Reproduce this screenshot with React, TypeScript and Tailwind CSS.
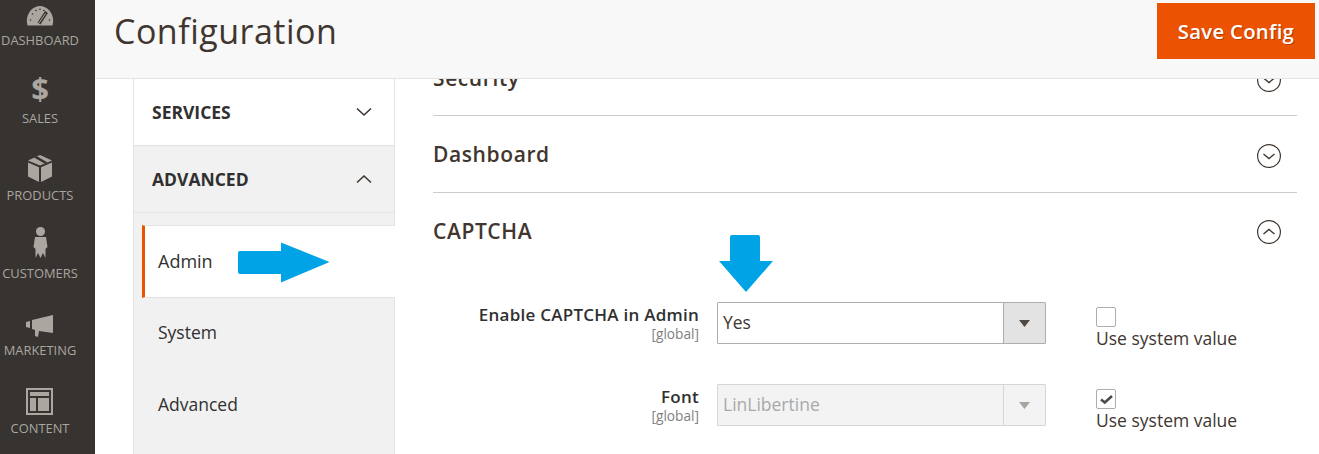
import { ReactNode } from 'react';

const FONT = "font-['Open_Sans',sans-serif]";

function NavItem({ label, icon, className }: { label: string; icon: ReactNode; className: string }) {
  return (
    <div className={`flex flex-col items-center h-[59px] ${className}`}>
      <div className="h-[38px] flex items-end justify-center">{icon}</div>
      <span className="mt-[5px] text-[12.9px] leading-[16px] text-[#aaa6a0] whitespace-nowrap">{label}</span>
    </div>
  );
}

function CircleChevron({ up }: { up?: boolean }) {
  return (
    <svg width="26" height="26" viewBox="0 0 26 26" fill="none" stroke="#41362f" strokeWidth="1.2">
      <circle cx="13" cy="13" r="11.4" />
      <path d={up ? 'M7.5 15 L13 10.5 L18.5 15' : 'M7.5 11 L13 15.5 L18.5 11'} strokeWidth="1.4" />
    </svg>
  );
}

function Chevron({ up }: { up?: boolean }) {
  return (
    <svg width="16" height="10" viewBox="0 0 16 10" fill="none" stroke="#41362f" strokeWidth="1.6">
      <path d={up ? 'M1 8.5 L8 2 L15 8.5' : 'M1 1.5 L8 8 L15 1.5'} />
    </svg>
  );
}

function BlueArrowRight() {
  return (
    <svg width="92" height="41" viewBox="0 0 92 41" className="block">
      <path d="M2 9 H43 V0.5 L91.5 20 L43 40.5 V32 H2 Q0 32 0 30 V11 Q0 9 2 9 Z" fill="#00a3e6" />
    </svg>
  );
}

function BlueArrowDown() {
  return (
    <svg width="56" height="58" viewBox="0 0 56 58" className="block">
      <path d="M12 2 Q12 0 14 0 H40 Q42 0 42 2 V26 H55 L28 57 L1 26 H12 Z" fill="#00a3e6" />
    </svg>
  );
}

function SelectBox({ value, disabled }: { value: string; disabled?: boolean }) {
  return (
    <div
      className={`w-[329px] h-[42px] flex border rounded-[1px] ${
        disabled ? 'border-[#d6d6d6] bg-[#f3f3f3]' : 'border-[#adadad] bg-white'
      }`}
    >
      <div className={`flex-1 pl-[5px] pb-[2px] flex items-center text-[17.5px] ${disabled ? 'text-[#a9a9a9]' : 'text-[#41362f]'}`}>
        {value}
      </div>
      <div
        className={`w-[42px] border-l flex items-center justify-center ${
          disabled ? 'border-[#d6d6d6] bg-[#f3f3f3]' : 'border-[#adadad] bg-[#e3e3e3]'
        }`}
      >
        <svg width="11" height="7" viewBox="0 0 11 7">
          <path d="M0 0 H11 L5.5 7 Z" fill={disabled ? '#a8a5a0' : '#514943'} />
        </svg>
      </div>
    </div>
  );
}

function SystemValue({ checked }: { checked?: boolean }) {
  return (
    <div className="ml-[50px] w-[150px] pt-[5px]">
      <div className="w-[20px] h-[20px] border border-[#adadad] rounded-[2px] bg-white flex items-center justify-center">
        {checked && (
          <svg width="13" height="9" viewBox="0 0 13 9" fill="none" stroke="#514943" strokeWidth="2.6">
            <path d="M1 4.5 L4.8 7.5 L12 1" />
          </svg>
        )}
      </div>
      <div className="text-[17.5px] leading-[22px] text-[#41362f] whitespace-nowrap">Use system value</div>
    </div>
  );
}

function FieldRow({ label, value, disabled, checked, className }: { label: string; value: string; disabled?: boolean; checked?: boolean; className: string }) {
  return (
    <div className={`flex ${className}`}>
      <div className="w-[284px] text-right pr-[18px]">
        <div className="mt-[2px] text-[17px] leading-[22px] font-semibold text-[#303030] tracking-[0.25px] whitespace-nowrap">{label}</div>
        <div className="mt-[1px] text-[13.7px] leading-[13px] text-[#808080]">[global]</div>
      </div>
      <SelectBox value={value} disabled={disabled} />
      <SystemValue checked={checked} />
    </div>
  );
}

export default function App() {
  return (
    <div className={`w-[1319px] h-[454px] overflow-hidden flex bg-white ${FONT}`}>
      <aside className="w-[95px] shrink-0 bg-[#373330] flex flex-col items-center pr-[15px]">
        <NavItem
          label="DASHBOARD"
          className="mt-[-11px]"
          icon={
            <svg width="28" height="20" viewBox="0 0 28 20" className="mb-[1px]">
              <path d="M1.5 19.5 C-1.5 9 6 0 14 0 C22 0 29.5 9 26.5 19.5 Z" fill="#aaa6a0" />
              <g fill="#373330">
                <circle cx="4.5" cy="14" r="0.8" />
                <circle cx="6.5" cy="8" r="0.8" />
                <circle cx="10" cy="4.5" r="0.8" />
                <circle cx="14" cy="3.2" r="0.8" />
                <circle cx="18" cy="4.5" r="0.8" />
                <circle cx="23.5" cy="14" r="0.8" />
              </g>
              <path d="M13 17.5 L20.5 6" stroke="#373330" strokeWidth="3.4" />
              <path d="M13 17 L19.5 7.5" stroke="#aaa6a0" strokeWidth="1" />
            </svg>
          }
        />
        <NavItem
          label="SALES"
          className="mt-[19px]"
          icon={<span className="text-[31px] leading-[30px] font-bold text-[#aaa6a0] mb-[2px]">$</span>}
        />
        <NavItem
          label="PRODUCTS"
          className="mt-[18px]"
          icon={
            <svg width="24" height="27" viewBox="0 0 24 27" fill="#aaa6a0">
              <path d="M12 0 L24 5.5 L12 10.5 L0 5.5 Z" />
              <path d="M6 2.6 L9 1.3 L19.5 7.4 L16.5 8.6 Z" fill="#373330" />
              <path d="M0 7.5 L11 12.2 V27 L0 21.5 Z" />
              <path d="M24 7.5 L13 12.2 V27 L24 21.5 Z" />
            </svg>
          }
        />
        <NavItem
          label="CUSTOMERS"
          className="mt-[19px]"
          icon={
            <svg width="15" height="31" viewBox="0 0 15 31" fill="#aaa6a0" className="mb-[2px]">
              <circle cx="7.5" cy="4.5" r="4.5" />
              <path d="M2 10 H13 L14.5 20 L12.5 22 V31 L10 26 L7.5 31 L5 26 L2.5 31 V22 L0.5 20 Z" />
            </svg>
          }
        />
        <NavItem
          label="MARKETING"
          className="mt-[18px]"
          icon={
            <svg width="27" height="22" viewBox="0 0 27 22" fill="#aaa6a0">
              <path d="M0 7 L4 6 V13 L0 12 Z" />
              <path d="M6 5 L27 0 V18 L13 16 L12 22 L9 21 L9 15 L6 14 Z" />
            </svg>
          }
        />
        <NavItem
          label="CONTENT"
          className="mt-[19px]"
          icon={
            <svg width="27" height="27" viewBox="0 0 27 27" fill="#aaa6a0">
              <path fillRule="evenodd" d="M0 0 H27 V27 H0 Z M2 2 V25 H25 V2 Z" />
              <path d="M4 4 H23 V8 H4 Z M4 10 H10 V23 H4 Z M12 10 H23 V23 H12 Z" />
            </svg>
          }
        />
      </aside>

      <div className="flex-1 min-w-0 flex flex-col">
        <header className="h-[79px] shrink-0 bg-[#f8f8f8] border-b border-[#e3e3e3] flex justify-between pl-[19px] pr-[4px]">
          <h1 className="mt-[8px] text-[34px] leading-[46px] text-[#41362f] tracking-[0.5px]">Configuration</h1>
          <button className="mt-[3px] w-[158px] h-[56px] bg-[#eb5202] text-white text-[20.3px] font-semibold tracking-[0.3px] [text-shadow:1px_1px_0_#b84002]">
            Save Config
          </button>
        </header>

        <div className="flex-1 min-h-0 flex">
          <nav className="ml-[38px] w-[262px] shrink-0 border-x border-[#e3e3e3] bg-[#f1f1f1]">
            <div className="h-[67px] bg-white border-b border-[#e3e3e3] flex items-center justify-between pl-[18px] pr-[22px]">
              <span className="text-[17.5px] font-bold text-[#303030]">SERVICES</span>
              <Chevron />
            </div>
            <div className="h-[67px] border-b border-[#e3e3e3] flex items-center justify-between pl-[18px] pr-[22px]">
              <span className="text-[17.5px] font-bold text-[#303030]">ADVANCED</span>
              <Chevron up />
            </div>
            <div className="mt-[12px] ml-[8px] mr-[-1px] h-[73px] bg-white border-y border-[#e3e3e3] border-l-[3px] border-l-[#eb5202] flex items-center pl-[13px]">
              <span className="text-[18px] text-[#303030]">Admin</span>
              <div className="ml-[25px] mt-[2px]">
                <BlueArrowRight />
              </div>
            </div>
            <div className="h-[69px] pl-[24px] flex items-center text-[17.5px] text-[#303030]">System</div>
            <div className="h-[74px] pl-[24px] flex items-center text-[17.5px] text-[#303030]">Advanced</div>
          </nav>

          <main className="flex-1 min-w-0 pl-[38px] pr-[22px] relative">
            <div className="h-[37px] border-b border-[#cccccc] flex justify-between overflow-hidden">
              <span className="mt-[-15px] text-[21px] leading-[28px] font-semibold text-[#41362f] tracking-[0.6px]">Security</span>
              <div className="mt-[-12px] pr-[15px]">
                <CircleChevron />
              </div>
            </div>
            <div className="h-[77px] border-b border-[#cccccc] flex items-center justify-between pr-[15px]">
              <span className="mt-[2px] text-[21px] font-semibold text-[#41362f] tracking-[0.6px]">Dashboard</span>
              <div className="mt-[3px]">
                <CircleChevron />
              </div>
            </div>
            <div className="h-[77px] flex items-center justify-between pr-[15px]">
              <span className="text-[21px] font-semibold text-[#41362f] tracking-[0.6px]">CAPTCHA</span>
              <div className="mt-[1px]">
                <CircleChevron up />
              </div>
            </div>
            <div className="absolute left-[323px] top-[156px]">
              <BlueArrowDown />
            </div>
            <FieldRow label="Enable CAPTCHA in Admin" value="Yes" className="mt-[32px]" />
            <FieldRow label="Font" value="LinLibertine" disabled checked className="mt-[35px]" />
          </main>
        </div>
      </div>
    </div>
  );
}
